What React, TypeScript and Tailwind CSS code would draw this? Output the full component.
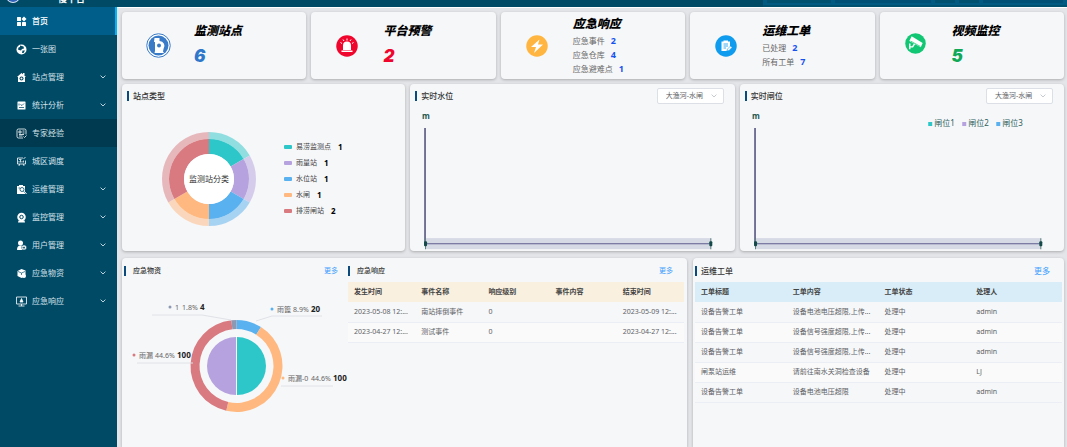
import { ReactNode } from "react";

interface MenuItem {
  label: string;
  icon: ReactNode;
  expandable?: boolean;
  state?: "active" | "hover";
}

interface Slice {
  value: number;
  color: string;
}

const COLORS = {
  teal: "#2ec7c9",
  purple: "#b6a2de",
  blue: "#5ab1ef",
  orange: "#ffb980",
  red: "#d87a80",
  slate: "#8d98b3",
};

const menu: MenuItem[] = [
  {
    label: "首页",
    state: "active",
    icon: (
      <g fill="currentColor">
        <rect x="1" y="1" width="8" height="8" rx="1" />
        <path d="M15 0l5 5-5 5-5-5z" />
        <rect x="1" y="11" width="8" height="8" rx="1" />
        <rect x="11" y="11" width="8" height="8" rx="1" />
      </g>
    ),
  },
  {
    label: "一张图",
    icon: (
      <g>
        <circle cx="10" cy="10" r="10" fill="currentColor" />
        <path d="M7 2l7 2 1 4-4 1-2 3-4-1-2-1 1-4 3-1zM12 12l5 0-3 5-3 0z" fill="#004a66" />
      </g>
    ),
  },
  {
    label: "站点管理",
    expandable: true,
    icon: (
      <g>
        <path d="M10 1l9 8h-2v10H3V9H1z" fill="currentColor" />
        <rect x="13" y="1" width="3" height="5" fill="currentColor" />
        <circle cx="10" cy="12" r="4" fill="#004a66" />
        <circle cx="10" cy="12" r="2" fill="currentColor" />
      </g>
    ),
  },
  {
    label: "统计分析",
    expandable: true,
    icon: (
      <g>
        <rect x="2" y="2" width="16" height="16" rx="1" fill="currentColor" />
        <path d="M5 6v4M8 8l3 2 4-4M5 14h10" stroke="#004a66" strokeWidth="1.5" fill="none" />
      </g>
    ),
  },
  {
    label: "专家经验",
    state: "hover",
    icon: (
      <g fill="none" stroke="currentColor" strokeWidth="1.6">
        <path d="M19 12V4a3 3 0 0 0-3-3H4a3 3 0 0 0-3 3v12a3 3 0 0 0 3 3h9" />
        <path d="M5 5h4v4H5zM12 5h4M12 9h4M5 12h10M5 15h7M14 16l2 2 4-4" />
      </g>
    ),
  },
  {
    label: "城区调度",
    icon: (
      <g fill="none" stroke="currentColor" strokeWidth="1.6">
        <path d="M13 3H2v12h16V8M5 19l1-4M15 19l-1-4" />
        <path d="M5 12V9M8 12V7M11 12V9M14 12V8M14 4l4-2M5 6h5" />
      </g>
    ),
  },
  {
    label: "运维管理",
    expandable: true,
    icon: (
      <g>
        <path d="M1 3h4V1h8v2h4v16H1z" fill="currentColor" />
        <circle cx="11" cy="10" r="4" fill="none" stroke="#004a66" strokeWidth="1.6" />
        <path d="M14 13l5 6M4 7h3" stroke="#004a66" strokeWidth="1.6" />
        <path d="M16 14l4 5" stroke="currentColor" strokeWidth="2" />
      </g>
    ),
  },
  {
    label: "监控管理",
    expandable: true,
    icon: (
      <g>
        <circle cx="10" cy="9" r="8.5" fill="currentColor" />
        <circle cx="10" cy="9" r="3.5" fill="none" stroke="#004a66" strokeWidth="2" />
        <path d="M4 16h12l1 4H3z" fill="currentColor" />
      </g>
    ),
  },
  {
    label: "用户管理",
    expandable: true,
    icon: (
      <g>
        <circle cx="8" cy="5" r="5" fill="currentColor" />
        <path d="M1 19c0-6 2-9 7-9 3 0 4 1 5 2v7z" fill="currentColor" />
        <circle cx="15" cy="14" r="5" fill="currentColor" stroke="#004a66" />
        <path d="M15 12v5M12 14h5" stroke="#004a66" strokeWidth="1.5" />
      </g>
    ),
  },
  {
    label: "应急物资",
    expandable: true,
    icon: (
      <g>
        <path d="M10 1l8 3v7l-1 5-7 3-8-4V5z" fill="currentColor" />
        <path d="M3 6l7 3 7-3M10 9v4" stroke="#004a66" strokeWidth="1.3" fill="none" />
        <circle cx="15" cy="15" r="4" fill="currentColor" />
      </g>
    ),
  },
  {
    label: "应急响应",
    expandable: true,
    icon: (
      <g fill="none" stroke="currentColor" strokeWidth="1.6">
        <path d="M0 1h20v14H0zM4 19h12M10 15v4" />
        <path d="M10 4l3 7H7z" fill="currentColor" />
      </g>
    ),
  },
];

const stationTypes = [
  { name: "易涝监测点", value: 1, color: COLORS.teal },
  { name: "雨量站", value: 1, color: COLORS.purple },
  { name: "水位站", value: 1, color: COLORS.blue },
  { name: "水闸", value: 1, color: COLORS.orange },
  { name: "排涝闸站", value: 2, color: COLORS.red },
];

const suppliesRing: Slice[] = [
  { value: 20, color: COLORS.blue },
  { value: 100, color: COLORS.orange },
  { value: 100, color: COLORS.red },
  { value: 4, color: COLORS.slate },
];

const suppliesLabels = [
  { x: 48, y: 25, name: "1", percent: "1.8%", value: 4, offsets: [5, 12, 30], color: COLORS.slate, line: "M30 33h50l29 5" },
  { x: 150, y: 27, name: "雨篦", percent: "8.9%", value: 20, offsets: [5, 21, 39], color: COLORS.blue, line: "M200 34h-50l-16 5" },
  { x: 12, y: 73, name: "雨漏", percent: "44.6%", value: 100, offsets: [5, 21, 43], color: COLORS.red, line: "M15 81h56" },
  { x: 161, y: 96, name: "雨漏-0", percent: "44.6%", value: 100, offsets: [5, 28, 50], color: COLORS.orange, line: "M159 104h52" },
];

const eventRows = [
  ["2023-05-08 12:...", "南站摔倒事件", "0", "", "2023-05-09 12:..."],
  ["2023-04-27 12:...", "测试事件", "0", "", "2023-04-27 12:..."],
];

const orderRows = [
  ["设备告警工单", "设备电池电压超限,上传...", "处理中", "admin"],
  ["设备告警工单", "设备信号强度超限,上传...", "处理中", "admin"],
  ["设备告警工单", "设备信号强度超限,上传...", "处理中", "admin"],
  ["闸泵站运维", "请前往南水关洞检查设备", "处理中", "LJ"],
  ["设备告警工单", "设备电池电压超限", "处理中", "admin"],
];

// ring segment between two angles, clockwise from twelve o'clock
function arc(cx: number, cy: number, outer: number, inner: number, from: number, to: number) {
  const point = (r: number, a: number) =>
    `${cx + r * Math.sin(a)} ${cy - r * Math.cos(a)}`;
  const large = to - from > Math.PI ? 1 : 0;
  return `M${point(outer, from)}A${outer} ${outer} 0 ${large} 1 ${point(outer, to)}L${point(inner, to)}A${inner} ${inner} 0 ${large} 0 ${point(inner, from)}Z`;
}

function Ring({ data, cx, cy, outer, inner, opacity = 1 }: {
  data: Slice[]; cx: number; cy: number; outer: number; inner: number; opacity?: number;
}) {
  const total = data.reduce((sum, d) => sum + d.value, 0);
  let start = 0;
  return (
    <g opacity={opacity}>
      {data.map((d, i) => {
        const from = start;
        start += (d.value / total) * Math.PI * 2;
        return <path key={i} d={arc(cx, cy, outer, inner, from, start)} fill={d.color} />;
      })}
    </g>
  );
}

function Chevron({ className }: { className: string }) {
  return (
    <svg viewBox="0 0 10 6" className={className} fill="none" stroke="currentColor" strokeWidth="1.5">
      <path d="M1 1l4 4 4-4" />
    </svg>
  );
}

function Sidebar() {
  return (
    <nav className="w-[117px] shrink-0 bg-[#004a66] text-[#d5e3ea]">
      {menu.map((item) => (
        <button
          key={item.label}
          type="button"
          className={`flex h-7 w-full items-center gap-[5px] pl-4 pr-[11px] text-[8px] ${
            item.state === "active"
              ? "border-r-2 border-[#00b4f5] bg-[#005f8a] font-medium text-white"
              : item.state === "hover"
              ? "bg-[#003a50]"
              : ""
          }`}
        >
          <svg viewBox="-1 -1 22 22" className="size-[11px] shrink-0 text-white">
            {item.icon}
          </svg>
          <span className="flex-1 text-left">{item.label}</span>
          {item.expandable && <Chevron className="w-[6px]" />}
        </button>
      ))}
    </nav>
  );
}

function StatCard({ icon, title, children }: { icon: ReactNode; title: string; children: ReactNode }) {
  return (
    <section className="flex h-[67px] items-center rounded bg-[#f6f7f9] shadow-[0_1px_3px_#00000040]">
      <div className="flex w-[72px] shrink-0 justify-center">{icon}</div>
      <div className="pb-[2px]">
        <h2 className="text-[12px] leading-5 font-black italic text-black">{title}</h2>
        {children}
      </div>
    </section>
  );
}

function BigNumber({ value, className }: { value: number; className: string }) {
  return (
    <p className={`pt-[3px] font-[Inter] text-[17px] leading-6 font-black italic ${className}`}>{value}</p>
  );
}

function StatLine({ label, value }: { label: string; value: number }) {
  return (
    <p className="flex gap-[6px] text-[8px] leading-[14px] text-[#666]">
      {label}
      <b className="text-[9px] text-[#1652f0]">{value}</b>
    </p>
  );
}

function PanelTitle({ title, more, small }: { title: string; more?: boolean; small?: boolean }) {
  return (
    <div className={`flex items-center ${small ? "text-[7px] leading-[10px]" : "text-[8px] leading-[10px]"}`}>
      <span className="h-[10px] w-[2px] bg-[#0a4a7c]" />
      <h3 className={`flex-1 font-medium text-[#333] ${small ? "pl-[7px]" : "pl-1"}`}>{title}</h3>
      {more && <a href="#more" className="text-[#409eff]">更多</a>}
    </div>
  );
}

function LevelPanel({ title, id, legend }: { title: string; id: string; legend?: boolean }) {
  return (
    <section className="rounded bg-[#f6f7f9] shadow-[0_1px_3px_#00000040]">
      <div className="flex h-[23px] items-center justify-between pl-[5px] pr-[11px]">
        <PanelTitle title={title} />
        <div className="grid items-center">
          <select
            id={id}
            aria-label={title}
            className="col-start-1 row-start-1 h-4 w-[67px] appearance-none rounded-[2px] border border-[#dcdfe6] bg-white pl-2 text-[7px] leading-[14px] text-[#606266]"
          >
            <option>大渔河-水闸</option>
          </select>
          <Chevron className="pointer-events-none col-start-1 row-start-1 mr-[7px] w-[6px] justify-self-end text-[#c0c4cc]" />
        </div>
      </div>
      <svg viewBox="0 0 324 144" className="block w-full">
        <text x="12" y="12" fontSize="8" fontWeight="700" fill="#1f5750">m</text>
        <rect x="16" y="131" width="285" height="11" fill="#d6dae4" />
        <path d="M15 21v116" stroke="#4a4a78" strokeWidth="1.5" />
        <path d="M15 136.5h286" stroke="#5f5c90" />
        <path d="M15.5 131v11M300.5 131v11" stroke="#5f7f80" />
        <rect x="14" y="134" width="3" height="5" rx="1" fill="#134a48" />
        <rect x="299" y="134" width="3" height="5" rx="1" fill="#134a48" />
        {legend &&
          [COLORS.teal, COLORS.purple, COLORS.blue].map((color, i) => (
            <g key={color}>
              <rect x={188 + i * 34} y="15" width="4" height="4" fill={color} />
              <text x={194 + i * 34} y="19" fontSize="8" fill="#2f5f5c">{`闸位${i + 1}`}</text>
            </g>
          ))}
      </svg>
    </section>
  );
}

function DataTable({ heads, rows, headClass }: { heads: string[]; rows: string[][]; headClass: string }) {
  return (
    <table className="w-full table-fixed text-left text-[7px] text-[#606266]">
      <thead className={headClass}>
        <tr className="h-5">
          {heads.map((h) => (
            <th key={h} className="pl-[6px] font-bold text-[#444]">{h}</th>
          ))}
        </tr>
      </thead>
      <tbody>
        {rows.map((row, r) => (
          <tr key={r} className="h-5 border-b border-[#ebeef5] even:bg-[#fafafa]">
            {row.map((cell, c) => (
              <td key={c} className="pl-[6px] whitespace-nowrap">{cell}</td>
            ))}
          </tr>
        ))}
      </tbody>
    </table>
  );
}

function SuppliesChart() {
  return (
    <svg viewBox="0 0 226 140" className="w-[226px] overflow-visible">
      <Ring data={suppliesRing} cx={114.5} cy={84} outer={46} inner={37} />
      <path d={arc(115, 84, 29, 0, 0, Math.PI)} fill={COLORS.teal} />
      <path d={arc(114, 84, 29, 0, Math.PI, Math.PI * 2)} fill={COLORS.purple} />
      <path d="M114.5 54v60" stroke="#fff" />
      {suppliesLabels.map((l, i) => (
        <g key={i} fontSize="7">
          <path d={l.line} fill="none" stroke="#e0e2e8" />
          <circle cx={l.x} cy={l.y} r="1.5" fill={l.color} />
          <text y={l.y + 3} fill="#666">
            <tspan x={l.x + l.offsets[0]}>{l.name}</tspan>
            <tspan x={l.x + l.offsets[1]}>{l.percent}</tspan>
            <tspan x={l.x + l.offsets[2]} fill="#222" fontWeight="700" fontSize="8">{l.value}</tspan>
          </text>
        </g>
      ))}
    </svg>
  );
}

export default function App() {
  return (
    <div className="flex h-screen flex-col overflow-hidden bg-[#e3e5e8] font-['Noto_Sans','Noto_Sans_CJK_SC',sans-serif]">
      <header className="flex h-[7px] shrink-0 items-end justify-between overflow-hidden bg-[#004a66]">
        <div className="flex items-end">
          <svg viewBox="0 0 14 14" className="mb-1 ml-[6px] w-[14px]">
            <circle cx="7" cy="7" r="7" fill="#dbe6f5" />
            <circle cx="7" cy="7" r="6" fill="#2f62b8" />
          </svg>
          <h1 className="ml-[38px] pb-[4px] text-[9px] leading-[9px] font-bold text-white">慢平台</h1>
        </div>
        <div className="flex h-full w-[304px] items-start gap-1 border-b-2 border-[#00506f] bg-[#005a82] px-1">
          <span className="h-[3px] w-16 bg-[#00506f]" />
          <span className="h-[3px] flex-1 bg-[#005075]" />
          <span className="h-[3px] w-5 bg-[#00506f]" />
          <span className="h-[3px] w-5 bg-[#00506f]" />
          <span className="h-[3px] w-20 bg-[#005075]" />
        </div>
      </header>

      <div className="flex min-h-0 flex-1">
        <Sidebar />
        <main className="flex min-w-0 flex-1 flex-col gap-[5px] border-t border-white pt-1 pr-[3px] pl-[5px]">
          <div className="grid grid-cols-5 gap-[5px]">
            <StatCard
              title="监测站点"
              icon={
                <svg viewBox="0 0 50 50" className="w-[25px]">
                  <circle cx="25" cy="25" r="23.5" fill="#fff" stroke="#3a7bc8" strokeWidth="2" />
                  <circle cx="25" cy="25" r="20" fill="#3a7bc8" />
                  <path d="M17 10h10v6a10 10 0 0 1 8 16l-1 5 2 3H17l1-4V18h-2z" fill="#fff" />
                  <circle cx="26" cy="25" r="4" fill="#3a7bc8" />
                </svg>
              }
            >
              <BigNumber value={6} className="text-[#2f77cb]" />
            </StatCard>
            <StatCard
              title="平台预警"
              icon={
                <svg viewBox="0 0 44 44" className="w-[22px]">
                  <circle cx="22" cy="22" r="21.5" fill="#f0052d" />
                  <path d="M14 30V21a8 8 0 0 1 16 0v9zM11 31h22v3H11z" fill="#fff" />
                  <path d="M22 7v4M14 9l2 3M30 9l-2 3M9 15l3 2M35 15l-3 2" stroke="#fff" strokeWidth="2" />
                </svg>
              }
            >
              <BigNumber value={2} className="text-[#f0052d]" />
            </StatCard>
            <StatCard
              title="应急响应"
              icon={
                <svg viewBox="0 0 44 44" className="w-[22px]">
                  <circle cx="22" cy="22" r="21.5" fill="#ffb53f" />
                  <path d="M27 9L10 24h10l-4 12 18-17H24z" fill="#fff" />
                </svg>
              }
            >
              <StatLine label="应急事件" value={2} />
              <StatLine label="应急仓库" value={4} />
              <StatLine label="应急避难点" value={1} />
            </StatCard>
            <StatCard
              title="运维工单"
              icon={
                <svg viewBox="0 0 44 44" className="w-[22px]">
                  <circle cx="22" cy="22" r="21.5" fill="#0f9bee" />
                  <path d="M13 13h4v-2h9v2h4v11l-7 8H13z" fill="#fff" />
                  <path d="M17 18h9M17 22h9M17 26h5" stroke="#0f9bee" strokeWidth="1.6" />
                  <path d="M24 32l1-4 6-6 3 3-6 6z" fill="#fff" stroke="#0f9bee" />
                </svg>
              }
            >
              <StatLine label="已处理" value={2} />
              <StatLine label="所有工单" value={7} />
            </StatCard>
            <StatCard
              title="视频监控"
              icon={
                <svg viewBox="0 0 44 44" className="mb-1 w-[21px]">
                  <circle cx="22" cy="22" r="21.5" fill="#12c774" />
                  <path d="M14 7l23 14-4 9L9 17z" fill="#fff" />
                  <path d="M10 22v12M10 29h6l4-6" stroke="#fff" strokeWidth="3" fill="none" />
                  <path d="M12 17l20 11" stroke="#12c774" strokeWidth="1.5" />
                </svg>
              }
            >
              <BigNumber value={5} className="text-[#0fa958]" />
            </StatCard>
          </div>

          <div className="grid grid-cols-[283fr_324fr_324fr] gap-[5px]">
            <section className="flex flex-col rounded bg-[#f6f7f9] shadow-[0_1px_3px_#00000040]">
              <div className="flex h-[23px] items-center pl-[5px]">
                <PanelTitle title="站点类型" />
              </div>
              <div className="flex flex-1 items-center gap-[28px] pl-10">
                <svg viewBox="0 0 94 94" className="w-[94px] shrink-0">
                  <Ring data={stationTypes} cx={47} cy={47} outer={47} inner={40} opacity={0.5} />
                  <Ring data={stationTypes} cx={47} cy={47} outer={40} inner={25} />
                  <circle cx="47" cy="47" r="25" fill="#fff" />
                  <text x="47" y="50" textAnchor="middle" fontSize="8" fill="#333">监测站分类</text>
                </svg>
                <ul className="text-[7px] leading-4 text-[#444]">
                  {stationTypes.map((s) => (
                    <li key={s.name} className="flex items-center">
                      <span className="mr-1 h-1 w-2 rounded-[1px]" style={{ background: s.color }} />
                      {s.name}
                      <b className="pl-[7px] text-[8px] text-black">{s.value}</b>
                    </li>
                  ))}
                </ul>
              </div>
            </section>
            <LevelPanel title="实时水位" id="water-station" />
            <LevelPanel title="实时闸位" id="gate-station" legend />
          </div>

          <div className="grid min-h-0 flex-1 grid-cols-[565fr_371fr] gap-[6px] pt-[2px]">
            <section className="flex rounded-t bg-[#f6f7f9] pt-2 shadow-[0_1px_3px_#00000040]">
              <div className="w-[226px] shrink-0">
                <div className="pr-[10px] pb-[6px] pl-[2px]">
                  <PanelTitle title="应急物资" more small />
                </div>
                <SuppliesChart />
              </div>
              <div className="min-w-0 flex-1 pr-[3px]">
                <div className="pr-[11px] pb-[6px]">
                  <PanelTitle title="应急响应" more small />
                </div>
                <DataTable
                  heads={["发生时间", "事件名称", "响应级别", "事件内容", "结束时间"]}
                  rows={eventRows}
                  headClass="bg-[#f9f0e0]"
                />
              </div>
            </section>
            <section className="rounded-t bg-[#f6f7f9] px-[2px] pt-2 shadow-[0_1px_3px_#00000040]">
              <div className="pr-3 pb-[6px]">
                <PanelTitle title="运维工单" more />
              </div>
              <DataTable
                heads={["工单标题", "工单内容", "工单状态", "处理人"]}
                rows={orderRows}
                headClass="bg-[#d8edf8]"
              />
            </section>
          </div>
        </main>
      </div>
    </div>
  );
}
